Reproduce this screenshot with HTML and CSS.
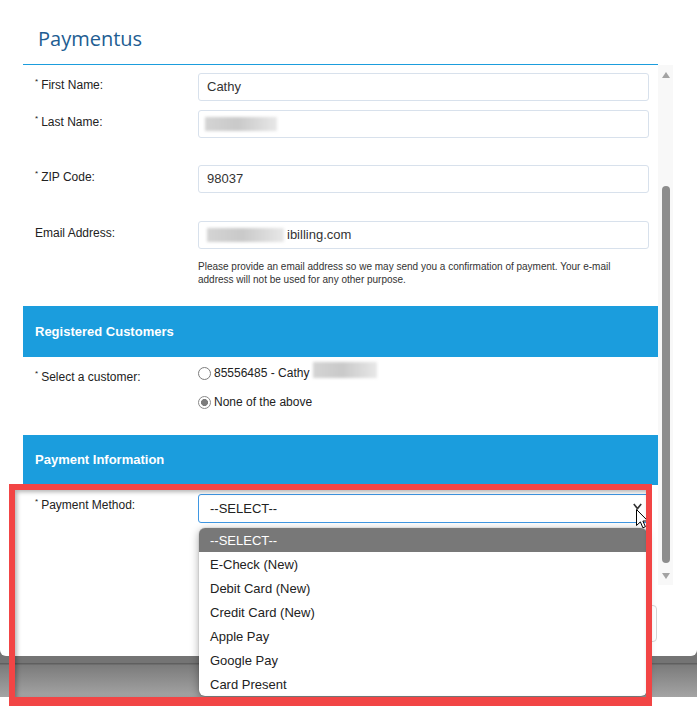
FILE: index.html
```html
<!DOCTYPE html>
<html lang="en">
<head>
<meta charset="utf-8">
<title>Paymentus</title>
<link rel="stylesheet" href="styles.css">
</head>
<body>
<div class="screen">
  <div class="modal">
    <div class="modal-header"><h1 class="title">Paymentus</h1></div>
    <div class="modal-body">
      <div class="content">
        <div class="row r1">
          <label class="lbl"><span class="req">*</span>First Name:</label>
          <div class="field"><div class="input">Cathy</div></div>
        </div>
        <div class="row r2">
          <label class="lbl"><span class="req">*</span>Last Name:</label>
          <div class="field"><div class="input"><span class="redact redact-last"></span></div></div>
        </div>
        <div class="row r3">
          <label class="lbl"><span class="req">*</span>ZIP Code:</label>
          <div class="field"><div class="input">98037</div></div>
        </div>
        <div class="row r4">
          <label class="lbl">Email Address:</label>
          <div class="field">
            <div class="input"><span class="redact redact-email"></span><span class="email-rest">ibilling.com</span></div>
            <p class="help">Please provide an email address so we may send you a confirmation of payment. Your e-mail<br>address will not be used for any other purpose.</p>
          </div>
        </div>

        <div class="section-bar bar-reg">Registered Customers</div>

        <div class="row r-cust">
          <label class="lbl"><span class="req">*</span>Select a customer:</label>
          <div class="radios">
            <label class="radio-opt"><input type="radio" name="cust" class="radio"><span>85556485 - Cathy</span><span class="redact redact-cust"></span></label>
            <label class="radio-opt opt2"><input type="radio" name="cust" class="radio" checked><span>None of the above</span></label>
          </div>
        </div>

        <div class="section-bar bar-pay">Payment Information</div>

        <div class="row r-pay">
          <label class="lbl"><span class="req">*</span>Payment Method:</label>
          <div class="field select-cell">
            <div class="select">
              <span>--SELECT--</span>
              <svg class="chev" width="9" height="7" viewBox="0 0 9 7"><path d="M0.8 1 L4.5 5.6 L8.2 1" fill="none" stroke="#333" stroke-width="1.6"/></svg>
            </div>
            <svg class="cursor" width="13" height="20" viewBox="0 0 13 20"><path d="M0.5 0.5 L0.5 16.5 L4.4 12.9 L6.9 18.8 L9.4 17.7 L6.9 12 L11.9 12 Z" fill="#fff" stroke="#000" stroke-width="1" stroke-linejoin="round"/></svg>
            <ul class="dropdown">
              <li class="opt active">--SELECT--</li>
              <li class="opt">E-Check (New)</li>
              <li class="opt">Debit Card (New)</li>
              <li class="opt">Credit Card (New)</li>
              <li class="opt">Apple Pay</li>
              <li class="opt">Google Pay</li>
              <li class="opt">Card Present</li>
            </ul>
          </div>
        </div>
      </div>
      <div class="scrollbar">
        <span class="sb-up"></span>
        <span class="sb-thumb"></span>
        <span class="sb-down"></span>
      </div>
    </div>
    <div class="modal-footer"><button class="btn" type="button"></button></div>
  </div>
  <div class="annotation"></div>
</div>
</body>
</html>
```

FILE: styles.css
```css
* { box-sizing: border-box; }

html, body {
  margin: 0;
  padding: 0;
  background: #fff;
}

body {
  font-family: "Liberation Sans", Arial, sans-serif;
  color: #222;
}

.screen {
  position: relative;
  width: 697px;
  height: 706px;
  overflow: hidden;
  background: linear-gradient(to bottom,
    #747474 0, #747474 663px,
    #5f5f5f 663px, #5f5f5f 664px,
    #7b7b7b 665px, #a4a4a4 697px,
    #ffffff 697px, #ffffff 706px);
}

.modal {
  width: 697px;
  height: 656px;
  background: #fff;
  border-radius: 0 0 6px 6px;
  display: flex;
  flex-direction: column;
}

/* header */
.modal-header {
  margin-left: 23px;
  width: 635px;
  padding: 25px 0 12px 15px;
  border-bottom: 1px solid #1b9ddd;
}

.title {
  margin: 0;
  font-family: "Open Sans", "Liberation Sans", sans-serif;
  font-weight: 400;
  font-size: 20px;
  line-height: 27px;
  color: #225d92;
}

/* body */
.modal-body {
  height: 520px;
  display: flex;
  padding-left: 23px;
}

.content {
  width: 635px;
  padding-top: 8px;
}

.row {
  display: grid;
  grid-template-columns: 163px 451px;
  padding-left: 12px;
}

.r2 { margin-top: 9px; }
.r3 { margin-top: 27px; }
.r4 { margin-top: 28px; }

.lbl {
  font-size: 12px;
  line-height: 14px;
  padding-top: 5px;
  color: #222;
}

.req {
  font-size: 8px;
  line-height: 8px;
  vertical-align: top;
  margin-right: 3px;
}

.input {
  height: 28px;
  border: 1px solid #d8e1ec;
  border-radius: 3px;
  padding: 0 8px;
  font-size: 13px;
  line-height: 26px;
  color: #333;
  display: flex;
  align-items: center;
}

.redact {
  display: inline-block;
  background: linear-gradient(to right, #d4d4d4, #c9c9c9 45%, #dcdcdc 80%, #e8e8e8);
  filter: blur(1.5px);
}

.redact-last {
  width: 72px;
  height: 14px;
  margin-left: -2px;
}

.redact-email {
  width: 77px;
  height: 14px;
}

.email-rest {
  margin-left: 3px;
}

.help {
  margin: 11px 0 0;
  font-size: 10px;
  line-height: 13px;
  color: #333;
}

/* section bars */
.section-bar {
  background: #1b9ddd;
  color: #fff;
  font-weight: 700;
  font-size: 13px;
  padding-left: 12px;
}

.bar-reg {
  margin-top: 20px;
  height: 51px;
  line-height: 51px;
}

.bar-pay {
  margin-top: 25px;
  height: 50px;
  line-height: 50px;
}

/* customers */
.r-cust { margin-top: 8px; }

.radios {
  display: flex;
  flex-direction: column;
}

.radio-opt {
  display: flex;
  align-items: center;
  height: 16px;
  font-size: 12px;
  color: #222;
}

.opt2 { margin-top: 13px; }

.radio {
  appearance: none;
  -webkit-appearance: none;
  width: 13px;
  height: 13px;
  margin: 0 3px 0 0;
  border: 1px solid #7d7d7d;
  border-radius: 50%;
  background: #fff;
}

.radio:checked {
  border-color: #8a8a8a;
  background: radial-gradient(circle, #7c7c7c 0, #7c7c7c 3.2px, #fff 3.8px);
}

.redact-cust {
  width: 64px;
  height: 16px;
  margin-left: 4px;
  margin-top: -6px;
}

/* payment */
.r-pay { margin-top: 9px; }

.r-pay .lbl { padding-top: 4px; }

.select-cell {
  position: relative;
}

.select {
  height: 29px;
  border: 1px solid #3f97e3;
  border-radius: 3px;
  padding: 0 6px 0 11px;
  font-size: 13px;
  color: #222;
  display: flex;
  align-items: center;
  justify-content: space-between;
}

.chev {
  display: block;
  margin-top: -4px;
}

.cursor {
  position: absolute;
  left: 438px;
  top: 15px;
  z-index: 6;
}

.dropdown {
  position: absolute;
  top: 34px;
  left: 1px;
  width: 448px;
  margin: 0;
  padding: 0;
  list-style: none;
  background: #fff;
  border-radius: 6px;
  overflow: hidden;
  box-shadow: 0 2px 8px rgba(0, 0, 0, 0.35), 0 0 1px rgba(0, 0, 0, 0.45);
  z-index: 5;
}

.opt {
  height: 24px;
  line-height: 25px;
  padding-left: 11px;
  font-size: 13px;
  color: #222;
}

.opt.active {
  background: #787878;
  color: #fff;
}

/* scrollbar */
.scrollbar {
  width: 15px;
  background: #f8f8f8;
  display: flex;
  flex-direction: column;
  align-items: center;
  padding-top: 7px;
}

.sb-up {
  width: 0;
  height: 0;
  border-left: 4.5px solid transparent;
  border-right: 4.5px solid transparent;
  border-bottom: 6px solid #a3a3a3;
}

.sb-thumb {
  width: 8px;
  height: 377px;
  margin-top: 108px;
  border-radius: 4px;
  background: #8d8d8d;
}

.sb-down {
  width: 0;
  height: 0;
  margin-top: 10px;
  border-left: 4.5px solid transparent;
  border-right: 4.5px solid transparent;
  border-top: 6px solid #a3a3a3;
}

/* footer */
.modal-footer {
  flex: 1;
  display: flex;
  justify-content: flex-end;
  padding: 20px 40px 0 0;
}

.btn {
  width: 110px;
  height: 37px;
  border: 1px solid #d5d5d5;
  border-radius: 4px;
  background: #fff;
}

/* annotation rectangle */
.annotation {
  position: absolute;
  left: 9px;
  top: 484px;
  width: 643px;
  height: 222px;
  border: 6px solid #f24545;
  border-bottom-width: 9px;
  box-shadow: inset 2px 2px 4px rgba(0, 0, 0, 0.3);
  pointer-events: none;
  z-index: 10;
}
```
